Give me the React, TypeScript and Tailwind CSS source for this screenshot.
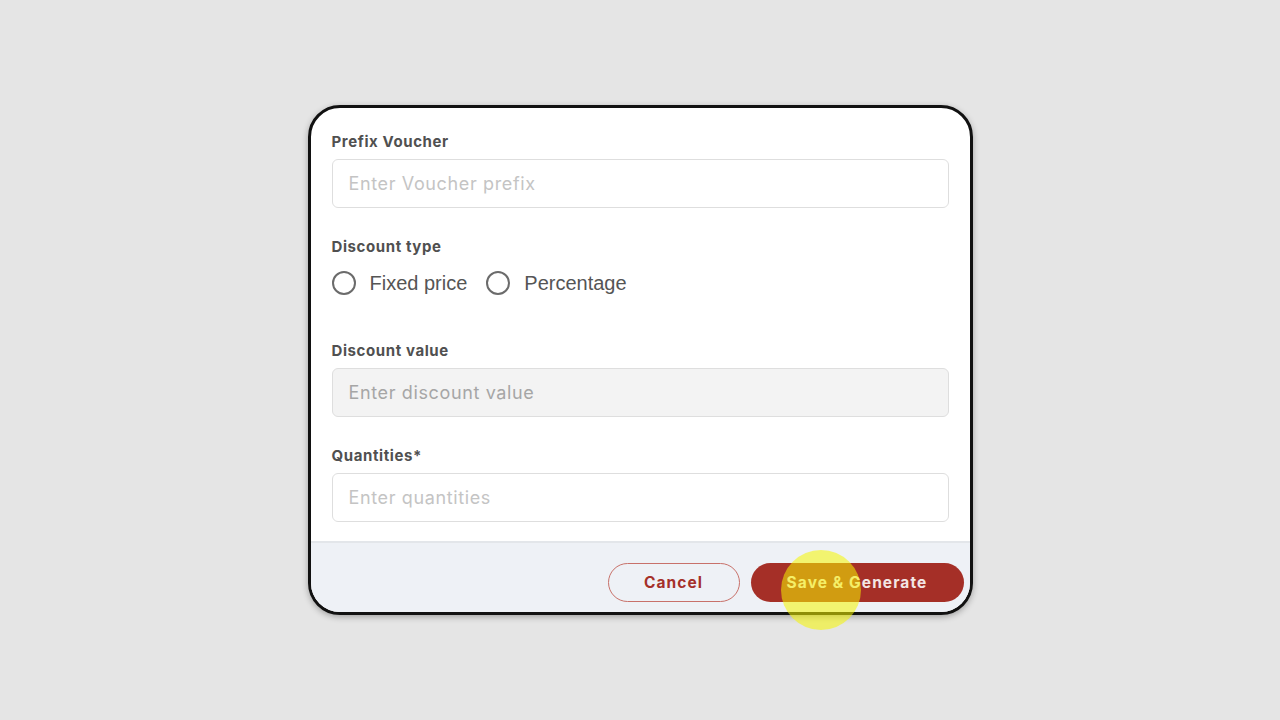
import React from 'react'

const style = {
  label: 'block text-[15px] leading-5 font-bold tracking-[0.04em] text-[#505050]',
  input:
    'block w-full h-[49px] px-4 rounded-md border border-[#dedede] text-[18px] tracking-[0.035em] text-[#444] outline-none',
  radio: 'w-6 h-6 rounded-full border-2 border-[#6b6b6b] bg-white',
  radioText: "text-[20px] text-[#555] font-['Liberation_Sans',Arial,sans-serif]",
}

function Radio({ label }: { label: string }) {
  return (
    <label className="flex items-center gap-[14px]">
      <span className={style.radio} />
      <span className={style.radioText}>{label}</span>
    </label>
  )
}

export default function App() {
  return (
    <div className="flex h-[720px] w-[1280px] items-center justify-center bg-[#e5e5e5] font-['Inter',sans-serif]">
      <div className="relative">
        <div className="flex h-[510px] w-[665px] flex-col overflow-hidden rounded-[32px] border-[3px] border-[#111] bg-white shadow-[0_2px_6px_rgba(0,0,0,0.3)]">
          <div className="flex-1 pl-[21px] pr-[21px] pt-6">
            <span className={style.label}>Prefix Voucher</span>
            <input
              className={`${style.input} mt-[7px] placeholder:text-[#c4c4c4]`}
              placeholder="Enter Voucher prefix"
            />

            <span className={`${style.label} mt-[29px]`}>Discount type</span>
            <div className="mt-[14px] flex h-6 items-center gap-[19px]">
              <Radio label="Fixed price" />
              <Radio label="Percentage" />
            </div>

            <span className={`${style.label} mt-[46px]`}>Discount value</span>
            <input
              className={`${style.input} mt-[7px] h-[48px] bg-[#f3f3f3] placeholder:text-[#a6a6a6]`}
              placeholder="Enter discount value"
              readOnly
            />

            <span className={`${style.label} mt-[29px]`}>Quantities*</span>
            <input
              className={`${style.input} mt-[7px] h-[48px] placeholder:text-[#c4c4c4]`}
              placeholder="Enter quantities"
            />
          </div>

          <div className="flex h-[71px] items-start justify-end gap-[11px] border-t-2 border-[#e3e6ea] bg-[#eef1f6] pr-[6px] pt-[20px]">
            <button className="h-[39px] w-[132px] rounded-full border border-[#c8716a] text-[15.5px] font-bold tracking-[0.07em] text-[#a5302a]">
              Cancel
            </button>
            <button className="h-[39px] w-[213px] rounded-full bg-[#a52f27] text-[15.5px] font-bold tracking-[0.07em] text-[#f3e6e4]">
              Save &amp; Generate
            </button>
          </div>
        </div>
        <div className="pointer-events-none absolute left-[473px] top-[445px] h-20 w-20 rounded-full bg-[rgba(245,245,0,0.55)]" />
      </div>
    </div>
  )
}
